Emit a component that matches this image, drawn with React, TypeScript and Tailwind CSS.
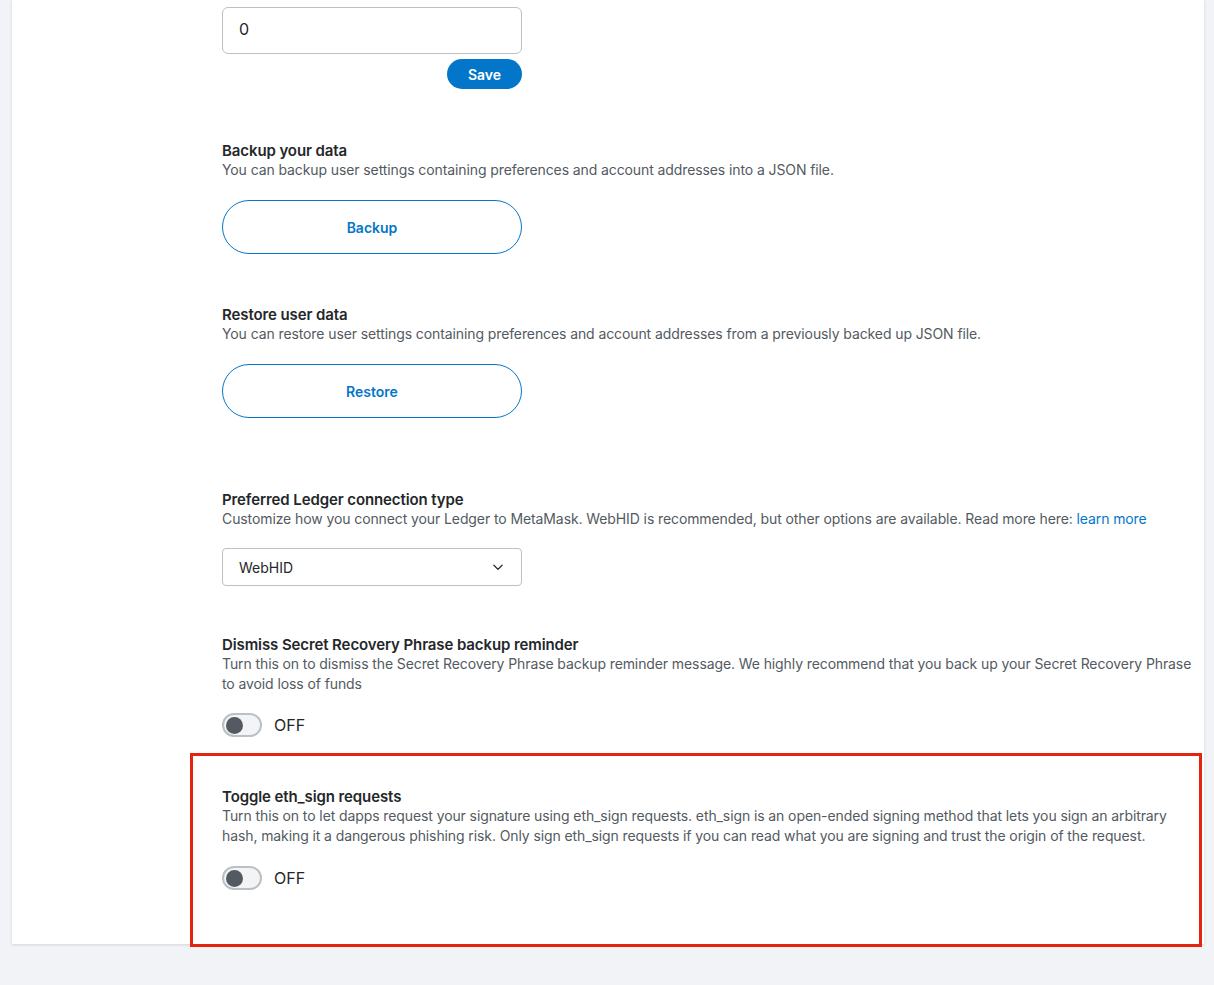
import React from "react";

function Toggle() {
  return (
    <div className="flex items-center gap-3">
      <div className="flex h-[24px] w-[40px] items-center rounded-full border-2 border-[#bbc0c5] bg-[#f2f4f6] px-[2px]">
        <div className="h-[17px] w-[17px] rounded-full bg-[#535a61]" />
      </div>
      <span className="text-[16px] text-[#24272a]">OFF</span>
    </div>
  );
}

function Head({ title, children }: { title: string; children: React.ReactNode }) {
  return (
    <div>
      <div className="text-[15px] font-semibold leading-[19px] tracking-[-0.1px] text-[#24272a]">{title}</div>
      <div className="text-[14px] leading-[20px] tracking-[-0.1px] text-[#535a61]">{children}</div>
    </div>
  );
}

export default function App() {
  return (
    <div
      className="min-h-[985px] bg-[#f2f3f6] pl-[12px] pr-[10px]"
      style={{ fontFamily: "Inter, 'Noto Sans', sans-serif" }}
    >
      <div className="flex flex-col bg-white pl-[210px] pr-[8px] pt-[7px] shadow-[0_1px_3px_rgba(0,0,0,0.12)]">
        <div className="flex w-[300px] flex-col items-end">
          <div className="flex h-[47px] w-full items-center rounded-[6px] border border-[#bbc0c5] px-[16px] pb-[3px] text-[16px] text-[#24272a]">
            0
          </div>
          <button className="mt-[5px] h-[30px] w-[75px] rounded-full bg-[#0376c9] text-[14px] font-semibold text-white">
            Save
          </button>
        </div>

        <div className="mt-[52px]">
          <Head title="Backup your data">
            You can backup user settings containing preferences and account addresses into a JSON file.
          </Head>
          <button className="mt-[20px] h-[54px] w-[300px] rounded-full border border-[#0376c9] text-[14px] font-semibold text-[#0376c9]">
            Backup
          </button>
        </div>

        <div className="mt-[51px]">
          <Head title="Restore user data">
            You can restore user settings containing preferences and account addresses from a previously backed up JSON file.
          </Head>
          <button className="mt-[20px] h-[54px] w-[300px] rounded-full border border-[#0376c9] text-[14px] font-semibold text-[#0376c9]">
            Restore
          </button>
        </div>

        <div className="mt-[72px]">
          <Head title="Preferred Ledger connection type">
            Customize how you connect your Ledger to MetaMask. WebHID is recommended, but other options are available. Read more here:{" "}
            <span className="text-[#0376c9]">learn more</span>
          </Head>
          <div className="mt-[19px] flex h-[38px] w-[300px] items-center justify-between rounded-[4px] border border-[#bbc0c5] pl-[16px] pr-[16px] text-[14px] text-[#24272a]">
            <span>WebHID</span>
            <svg width="14" height="14" viewBox="0 0 24 24" fill="none" stroke="#24272a" strokeWidth="2.2" strokeLinecap="round" strokeLinejoin="round">
              <path d="M5 9l7 7 7-7" />
            </svg>
          </div>
        </div>

        <div className="mt-[49px]">
          <Head title="Dismiss Secret Recovery Phrase backup reminder">
            Turn this on to dismiss the Secret Recovery Phrase backup reminder message. We highly recommend that you back up your Secret Recovery Phrase to avoid loss of funds
          </Head>
          <div className="mt-[19px]">
            <Toggle />
          </div>
        </div>

        <div className="-ml-[32px] -mr-[6px] mb-[-3px] mt-[16px] border-[3px] border-[#e2250c] pb-[54px] pl-[29px] pr-[16px] pt-[31px]">
          <Head title="Toggle eth_sign requests">
            Turn this on to let dapps request your signature using eth_sign requests. eth_sign is an open-ended signing method that lets you sign an arbitrary hash, making it a dangerous phishing risk. Only sign eth_sign requests if you can read what you are signing and trust the origin of the request.
          </Head>
          <div className="mt-[20px]">
            <Toggle />
          </div>
        </div>
      </div>
    </div>
  );
}
